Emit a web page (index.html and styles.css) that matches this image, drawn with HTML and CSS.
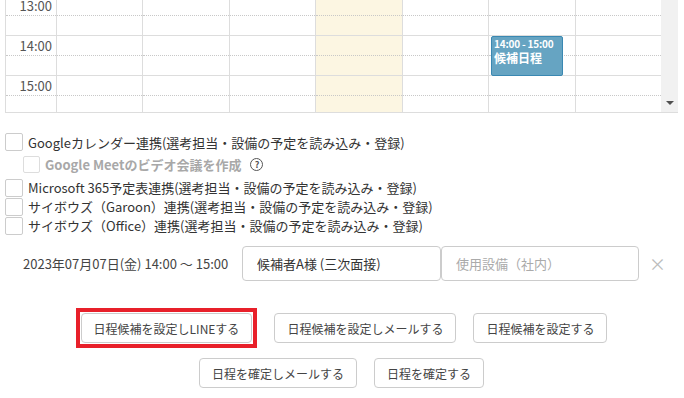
FILE: index.html
```html
<!DOCTYPE html>
<html lang="ja">
<head>
    <meta charset="UTF-8">
    <meta name="viewport" content="width=device-width, initial-scale=1.0">
    <title>日程調整</title>
    <link rel="stylesheet" href="styles.css">
</head>
<body>
    <!-- Week calendar (scrolled to the afternoon) -->
    <div class="calendar">
        <div class="viewport">
            <div class="grid">
                <div class="time-col">
                    <div class="hour"><div class="half">13:00</div></div>
                    <div class="hour"><div class="half">14:00</div></div>
                    <div class="hour"><div class="half">15:00</div></div>
                </div>
                <div class="day-col">
                    <div class="hour"><div class="half"></div></div>
                    <div class="hour"><div class="half"></div></div>
                    <div class="hour"><div class="half"></div></div>
                </div>
                <div class="day-col">
                    <div class="hour"><div class="half"></div></div>
                    <div class="hour"><div class="half"></div></div>
                    <div class="hour"><div class="half"></div></div>
                </div>
                <div class="day-col">
                    <div class="hour"><div class="half"></div></div>
                    <div class="hour"><div class="half"></div></div>
                    <div class="hour"><div class="half"></div></div>
                </div>
                <div class="day-col today">
                    <div class="hour"><div class="half"></div></div>
                    <div class="hour"><div class="half"></div></div>
                    <div class="hour"><div class="half"></div></div>
                </div>
                <div class="day-col">
                    <div class="hour"><div class="half"></div></div>
                    <div class="hour"><div class="half"></div></div>
                    <div class="hour"><div class="half"></div></div>
                </div>
                <div class="day-col">
                    <div class="hour"><div class="half"></div></div>
                    <div class="hour">
                        <div class="half"></div>
                        <div class="event">
                            <div class="event-time">14:00 - 15:00</div>
                            <div class="event-title">候補日程</div>
                        </div>
                    </div>
                    <div class="hour"><div class="half"></div></div>
                </div>
                <div class="day-col">
                    <div class="hour"><div class="half"></div></div>
                    <div class="hour"><div class="half"></div></div>
                    <div class="hour"><div class="half"></div></div>
                </div>
            </div>
        </div>
        <div class="scrollbar"><span class="arrow-down"></span></div>
    </div>

    <!-- Calendar integrations -->
    <div class="options">
        <label class="option first"><span class="check"></span>Googleカレンダー連携(選考担当・設備の予定を読み込み・登録)</label>
        <label class="option sub"><span class="check"></span>Google Meetのビデオ会議を作成<span class="help">?</span></label>
        <label class="option"><span class="check"></span>Microsoft 365予定表連携(選考担当・設備の予定を読み込み・登録)</label>
        <label class="option"><span class="check"></span>サイボウズ（Garoon）連携(選考担当・設備の予定を読み込み・登録)</label>
        <label class="option"><span class="check"></span>サイボウズ（Office）連携(選考担当・設備の予定を読み込み・登録)</label>
    </div>

    <!-- Selected slot -->
    <div class="slot-row">
        <span class="slot-date">2023年07月07日(金) 14:00 〜 15:00</span>
        <input class="field" type="text" value="候補者A様 (三次面接)">
        <input class="field" type="text" placeholder="使用設備（社内）">
        <span class="remove">×</span>
    </div>

    <!-- Actions -->
    <div class="actions">
        <div class="action-row">
            <span class="highlight-frame"><button class="btn">日程候補を設定しLINEする</button></span>
            <button class="btn">日程候補を設定しメールする</button>
            <button class="btn">日程候補を設定する</button>
        </div>
        <div class="action-row">
            <button class="btn">日程を確定しメールする</button>
            <button class="btn">日程を確定する</button>
        </div>
    </div>
</body>
</html>
```

FILE: styles.css
```css
body {
    font-family: "Noto Sans CJK JP", "Noto Sans", sans-serif;
    color: #333;
    background-color: #fff;
    margin: 0;
    padding: 0 6px 0 5px;
}

/* calendar */
.calendar {
    display: flex;
    height: 113px;
    box-sizing: border-box;
    border-left: 1px solid #ddd;
    border-bottom: 1px solid #ddd;
}

.viewport {
    flex: 1;
    overflow: hidden;
}

.grid {
    display: flex;
    margin-top: -5px;
}

.time-col {
    width: 51px;
    box-sizing: border-box;
    border-right: 1px solid #ddd;
}

.day-col {
    flex: 1 1 0;
    border-right: 1px solid #ddd;
}

.day-col:last-child {
    border-right: none;
}

.day-col.today {
    background-color: #fcf6e2;
}

.hour {
    position: relative;
    height: 40px;
    box-sizing: border-box;
    border-top: 1px solid #ddd;
}

.half {
    height: 20px;
    box-sizing: border-box;
    border-bottom: 1px dotted #c8c8c8;
}

.time-col .half {
    text-align: right;
    padding-right: 4px;
    font-size: 13px;
    line-height: 19px;
    color: #555;
}

.event {
    position: absolute;
    top: 0;
    left: 2px;
    width: 72px;
    height: 40px;
    box-sizing: border-box;
    padding: 1px 2px;
    background-color: #66a4c2;
    border: 1px solid #3a88b2;
    border-radius: 2px;
    color: #fff;
    font-weight: bold;
    z-index: 1;
}

.event-time {
    font-size: 10px;
    line-height: 12px;
    letter-spacing: -0.2px;
}

.event-title {
    font-size: 12px;
    line-height: 16px;
}

.scrollbar {
    position: relative;
    width: 17px;
    background-color: #f1f1f1;
}

.arrow-down {
    position: absolute;
    left: 5px;
    bottom: 7px;
    width: 0;
    height: 0;
    border-left: 4px solid transparent;
    border-right: 4px solid transparent;
    border-top: 4px solid #505050;
}

/* options */
.options {
    margin-top: 20px;
    font-size: 13px;
}

.option {
    display: flex;
    align-items: center;
    gap: 5px;
    height: 19px;
    line-height: 19px;
    white-space: nowrap;
}

.option.first {
    height: 18px;
}

.check {
    width: 18px;
    height: 18px;
    box-sizing: border-box;
    border: 1px solid #ccc;
    border-radius: 2px;
    background-color: #fff;
    flex-shrink: 0;
}

.option.sub {
    height: 17px;
    margin: 5px 0 5px 18px;
    color: #a8a8a8;
    font-weight: bold;
}

.option.sub .check {
    width: 17px;
    height: 17px;
    border-color: #ddd;
}

.help {
    display: inline-flex;
    justify-content: center;
    align-items: center;
    width: 13px;
    height: 13px;
    margin-left: 4px;
    box-sizing: border-box;
    border: 1.3px solid #555;
    border-radius: 50%;
    color: #555;
    font-size: 9px;
    line-height: 1;
    font-weight: bold;
}

/* selected slot */
.slot-row {
    display: flex;
    align-items: center;
    margin-top: 11px;
    padding-left: 18px;
}

.slot-date {
    width: 219px;
    font-size: 13px;
    color: #444;
}

.field {
    width: 199px;
    height: 35px;
    box-sizing: border-box;
    padding: 0 14px;
    border: 1px solid #ccc;
    border-radius: 4px;
    font-family: inherit;
    font-size: 13px;
    color: #333;
    background-color: #fff;
}

.field + .field {
    width: 198px;
}

.field::placeholder {
    color: #aaa;
}

.remove {
    margin-left: 10px;
    font-size: 17px;
    line-height: 1;
    color: #bbb;
}

/* actions */
.actions {
    margin-top: 32px;
}

.action-row {
    display: flex;
    justify-content: center;
    align-items: center;
    gap: 17px;
    margin-bottom: 15px;
}

.btn {
    height: 30px;
    padding: 0 12px;
    background-color: #fff;
    border: 1px solid #ccc;
    border-radius: 4px;
    font-family: inherit;
    font-size: 12px;
    color: #444;
    cursor: pointer;
}

.btn:hover {
    background-color: #f7f7f7;
}

.highlight-frame {
    display: flex;
    margin: -5px 0;
    padding: 1px;
    border: 4px solid #e8202a;
}
```
